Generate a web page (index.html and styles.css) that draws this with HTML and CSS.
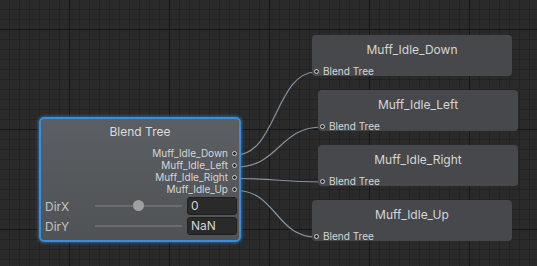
FILE: index.html
```html
<!DOCTYPE html>
<html lang="en">
<head>
    <meta charset="UTF-8">
    <title>Animator - Blend Tree</title>
    <link rel="stylesheet" href="styles.css">
</head>
<body>
    <div class="graph">
        <svg class="wires" width="537" height="266" viewBox="0 0 537 266">
            <path d="M236 155 C276 155 276 72 316 72"/>
            <path d="M236 167 C279 167 279 127 322 127"/>
            <path d="M236 178.5 C279 178.5 279 182 322 182"/>
            <path d="M236 190.5 C276 190.5 276 237 316 237"/>
        </svg>

        <div class="tree">
            <div class="tree-title">Blend Tree</div>
            <div class="outputs">
                <div class="out">Muff_Idle_Down <span class="dot"></span></div>
                <div class="out">Muff_Idle_Left <span class="dot"></span></div>
                <div class="out">Muff_Idle_Right <span class="dot"></span></div>
                <div class="out">Muff_Idle_Up <span class="dot"></span></div>
            </div>
            <div class="param">
                <span class="param-name">DirX</span>
                <div class="slider"><span class="knob"></span></div>
                <div class="field">0</div>
            </div>
            <div class="param">
                <span class="param-name">DirY</span>
                <div class="slider"></div>
                <div class="field">NaN</div>
            </div>
        </div>

        <div class="state state-down">
            <div class="state-title">Muff_Idle_Down</div>
            <div class="port"><span class="dot"></span>Blend Tree</div>
        </div>
        <div class="state state-left">
            <div class="state-title">Muff_Idle_Left</div>
            <div class="port"><span class="dot"></span>Blend Tree</div>
        </div>
        <div class="state state-right">
            <div class="state-title">Muff_Idle_Right</div>
            <div class="port"><span class="dot"></span>Blend Tree</div>
        </div>
        <div class="state state-up">
            <div class="state-title">Muff_Idle_Up</div>
            <div class="port"><span class="dot"></span>Blend Tree</div>
        </div>
    </div>
</body>
</html>
```

FILE: styles.css
```css
body {
    margin: 0;
    font-family: 'Inter', 'Liberation Sans', sans-serif;
    background: #282828;
    color: #d2d2d2;
}

.graph {
    position: relative;
    width: 537px;
    height: 266px;
    overflow: hidden;
    background-color: #2a2a2a;
    background-image:
        linear-gradient(to right, #161616 1px, transparent 1px),
        linear-gradient(to bottom, #161616 1px, transparent 1px),
        linear-gradient(to right, #222 1px, transparent 1px),
        linear-gradient(to bottom, #222 1px, transparent 1px);
    background-size: 100px 100px, 100px 100px, 10px 10px, 10px 10px;
    background-position: 69px 0, 0 29px, 9px 0, 0 9px;
}

.wires {
    position: absolute;
    left: 0;
    top: 0;
}

.wires path {
    fill: none;
    stroke: #8593a0;
    stroke-width: 1.2;
}

.dot {
    display: inline-block;
    width: 5px;
    height: 5px;
    box-sizing: border-box;
    border: 1px solid #cfd3d6;
    border-radius: 50%;
    background: #26282a;
    flex: none;
}

/* blend tree node (selected) */
.tree {
    position: absolute;
    left: 39px;
    top: 117px;
    width: 202px;
    height: 125px;
    box-sizing: border-box;
    border: 2px solid #3a8ddc;
    border-radius: 5px;
    background: linear-gradient(#5b5e62, #505356);
    box-shadow: 0 0 3px 1px rgba(60, 145, 230, 0.55);
    display: flex;
    flex-direction: column;
}

.tree-title {
    margin-top: 6px;
    font-size: 12px;
    line-height: 14px;
    text-align: center;
    color: #dcdcdc;
}

.outputs {
    margin-top: 8px;
    display: flex;
    flex-direction: column;
}

.out {
    display: flex;
    justify-content: flex-end;
    align-items: center;
    gap: 4px;
    padding-right: 2px;
    font-size: 10px;
    line-height: 12px;
    color: #d6d6d6;
}

.param {
    display: grid;
    grid-template-columns: 50px 87px 1fr;
    align-items: center;
    height: 18px;
    padding: 0 2px 0 4px;
    margin-top: 2px;
}

.param:first-of-type {
    margin-top: 1px;
}

.param-name {
    font-size: 12px;
    color: #c4c4c4;
}

.slider {
    position: relative;
    height: 2px;
    background: #6a6c6f;
}

.knob {
    position: absolute;
    left: 38px;
    top: -5px;
    width: 11px;
    height: 11px;
    border-radius: 50%;
    background: #a0a0a0;
}

.field {
    height: 18px;
    box-sizing: border-box;
    margin-left: 5px;
    background: #2a2a2a;
    border: 1px solid #1f1f1f;
    border-radius: 3px;
    padding-left: 3px;
    font-size: 12px;
    line-height: 16px;
    color: #d4d4d4;
}

/* animation state nodes */
.state {
    position: absolute;
    width: 200px;
    height: 41px;
    background: #46484b;
    border-radius: 4px;
    display: flex;
    flex-direction: column;
}

.state-down { left: 312px; top: 35px; }
.state-left { left: 318px; top: 90px; }
.state-right { left: 318px; top: 145px; }
.state-up { left: 312px; top: 200px; }

.state-title {
    margin-top: 8px;
    font-size: 12px;
    line-height: 14px;
    text-align: center;
    color: #d6d6d6;
}

.port {
    margin-top: auto;
    display: flex;
    align-items: center;
    gap: 4px;
    padding-left: 2px;
    height: 10px;
    font-size: 10px;
    line-height: 10px;
    color: #d6d6d6;
}
```
